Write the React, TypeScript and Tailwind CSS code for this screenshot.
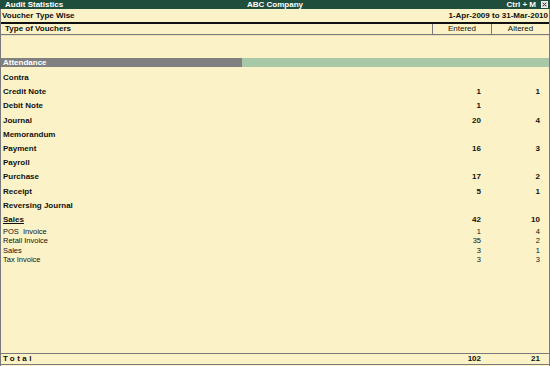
import React from 'react'

type Row = { name: string; entered?: number; altered?: number; sub?: boolean; underline?: boolean }

const rows: Row[] = [
  { name: 'Contra' },
  { name: 'Credit Note', entered: 1, altered: 1 },
  { name: 'Debit Note', entered: 1 },
  { name: 'Journal', entered: 20, altered: 4 },
  { name: 'Memorandum' },
  { name: 'Payment', entered: 16, altered: 3 },
  { name: 'Payroll' },
  { name: 'Purchase', entered: 17, altered: 2 },
  { name: 'Receipt', entered: 5, altered: 1 },
  { name: 'Reversing Journal' },
  { name: 'Sales', entered: 42, altered: 10, underline: true },
  { name: 'POS\u00a0 Invoice', entered: 1, altered: 4, sub: true },
  { name: 'Retail Invoice', entered: 35, altered: 2, sub: true },
  { name: 'Sales', entered: 3, altered: 1, sub: true },
  { name: 'Tax Invoice', entered: 3, altered: 3, sub: true },
]

export default function App() {
  return (
    <div
      className="w-[550px] h-[366px] flex flex-col bg-[#fbf3c7] text-[#111] overflow-hidden"
      style={{ fontFamily: '"Liberation Sans", Arial, sans-serif' }}
    >
      {/* Title bar */}
      <div className="h-[9px] shrink-0 bg-[#1f4e3d] text-white font-bold text-[8px] leading-[9px] flex items-center relative">
        <span className="pl-[5px]">Audit Statistics</span>
        <span className="absolute left-[247px]">ABC Company</span>
        <span className="ml-auto mr-[5px]">Ctrl + M</span>
        <svg width="7" height="7" viewBox="0 0 7 7" className="mr-[2px]">
          <rect x="0.5" y="0.5" width="6" height="6" fill="#d8d8d8" stroke="#f0f0f0" />
          <path d="M1.8 1.8 L5.2 5.2 M5.2 1.8 L1.8 5.2" stroke="#404040" strokeWidth="1" />
        </svg>
      </div>

      <div className="flex-1 flex flex-col border-x border-[#7a7a7a]">
        {/* Report title */}
        <div className="h-[15px] shrink-0 flex items-center justify-between font-bold text-[8px] border-b-2 border-[#111] pl-[1px] pr-[1px]">
          <span>Voucher Type Wise</span>
          <span>1-Apr-2009 to 31-Mar-2010</span>
        </div>

        {/* Column header */}
        <div className="h-[11px] shrink-0 flex text-[8px] border-b border-[#7a7a7a] shadow-[0_1px_0_#e8e0b8]">
          <div className="flex-1 flex items-center pl-[4px] font-bold">Type of Vouchers</div>
          <div className="w-[59px] flex items-center justify-center border-l border-[#7a7a7a]">Entered</div>
          <div className="w-[58px] flex items-center justify-center border-l border-[#7a7a7a]">Altered</div>
        </div>

        {/* Attendance bar */}
        <div className="mt-[23px] h-[9px] shrink-0 flex">
          <div className="w-[241px] bg-[#808080] text-white font-bold text-[8px] leading-[9px] pl-[2px]">Attendance</div>
          <div className="flex-1 bg-[#a8c8a8]" />
        </div>

        {/* Rows */}
        <div className="mt-[4px] flex flex-col">
          {rows.map((r, i) => (
            <div
              key={i}
              className={
                r.sub
                  ? 'h-[9.3px] flex items-center text-[7.5px] font-normal'
                  : 'h-[14.2px] flex items-center text-[8px] font-bold'
              }
            >
              <div className="flex-1 pl-[2px]">
                <span className={r.underline ? 'underline decoration-1 underline-offset-[1px]' : ''}>{r.name}</span>
              </div>
              <div className="w-[59px] text-right pr-[10px]">{r.entered ?? ''}</div>
              <div className="w-[58px] text-right pr-[9px]">{r.altered ?? ''}</div>
            </div>
          ))}
        </div>

        <div className="flex-1" />

        {/* Total */}
        <div className="h-[12px] shrink-0 flex items-center font-bold text-[8px] border-y border-[#7a7a7a] mb-[1px]">
          <div className="flex-1 pl-[2px] tracking-[2.5px]">Total</div>
          <div className="w-[59px] text-right pr-[10px]">102</div>
          <div className="w-[58px] text-right pr-[9px]">21</div>
        </div>
      </div>
    </div>
  )
}
